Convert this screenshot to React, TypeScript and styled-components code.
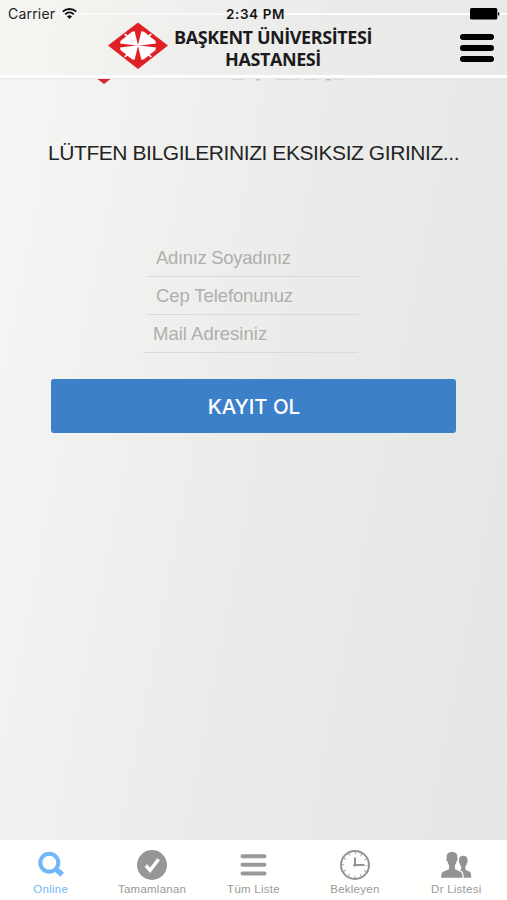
import React from "react";
import styled, { createGlobalStyle } from "styled-components";

const GlobalStyle = createGlobalStyle`
  *, *::before, *::after { box-sizing: border-box; }
  body { margin: 0; font-family: "Liberation Sans", Arial, sans-serif; }
`;

const Screen = styled.div`
  display: flex;
  flex-direction: column;
  width: 507px;
  height: 900px;
  overflow: hidden;
  background: linear-gradient(101deg, #f6f7f4 0%, #f1f1f0 25%, #ebecea 52%, #e6e9e6 80%, #e3e6e3 100%);
`;

const Header = styled.header`
  display: flex;
  flex-direction: column;
  height: 79px;
  background: linear-gradient(100deg, #f6f6f3 0%, #f0f0ee 30%, #ebecea 65%, #e9eae8 100%);
  border-bottom: 1px solid #e5e6e4;
`;

const StatusBar = styled.div`
  display: grid;
  grid-template-columns: 1fr auto 1fr;
  align-items: center;
  height: 19px;
  padding: 8px 7px 0 8px;
  line-height: 12px;
  background: linear-gradient(90deg, #f6f6f4, #fff) 0 13px / 100% 2px no-repeat;
`;

const Carrier = styled.div`
  display: flex;
  align-items: center;
  gap: 7px;
  font: 14px/12px Inter, sans-serif;
  letter-spacing: 0.2px;
  color: #222;
`;

const Clock = styled.time`
  margin-left: 3px;
  font: 600 13.5px/12px Inter, sans-serif;
  letter-spacing: 0.6px;
  color: #151515;
`;

const BatterySlot = styled.div`
  display: flex;
  justify-content: flex-end;
`;

const Brand = styled.div`
  display: grid;
  grid-template-columns: 60px 198px 1fr;
  column-gap: 6px;
  height: 56px;
  padding: 3px 13px 0 108px;
`;

const BrandName = styled.h1`
  margin: 4px 0 0;
  font: 700 18px/22px "Open Sans", sans-serif;
  letter-spacing: -0.42px;
  text-align: center;
  white-space: nowrap;
  color: #1b1b1d;
`;

const MenuButton = styled.button`
  display: flex;
  flex-direction: column;
  gap: 5px;
  justify-self: end;
  width: 34px;
  margin: 12px 0 0;
  padding: 0;
  border: 0;
  background: none;
`;

const MenuBar = styled.span`
  width: 34px;
  height: 6px;
  border-radius: 3px;
  background: #000;
`;

const HeaderEdge = styled.div`
  height: 3px;
  background: #fff;
`;

const Content = styled.main`
  display: flex;
  flex: 1;
  flex-direction: column;
`;

const LogoRemnant = styled.svg`
  display: block;
  width: 507px;
  height: 6px;
`;

const Title = styled.h2`
  margin: 55px 0 0 48px;
  font-size: 21px;
  font-weight: 400;
  line-height: 26px;
  letter-spacing: -0.43px;
  white-space: nowrap;
  color: #242424;
`;

const Form = styled.form`
  display: flex;
  flex-direction: column;
  margin-top: 73px;
`;

const Field = styled.input<{ $shift?: number; $tracking?: number }>`
  width: 215px;
  height: 38px;
  margin-left: ${({ $shift = 0 }) => 146 + $shift}px;
  padding: 0 0 0 10px;
  border: 0;
  border-bottom: 1px solid #d9dbd9;
  border-radius: 0;
  outline: 0;
  background: transparent;
  font: 18.5px/22px "Liberation Sans", Arial, sans-serif;
  letter-spacing: ${({ $tracking = 0 }) => $tracking}px;
  color: #333;
  &::placeholder {
    color: #aeafad;
    opacity: 1;
  }
`;

const SubmitButton = styled.button`
  width: 405px;
  height: 54px;
  margin: 26px 0 0 51.4px;
  padding: 1px 0 0;
  border: 0;
  border-radius: 3px;
  background: #3d80ca;
  font: 500 20.5px/53px Inter, sans-serif;
  letter-spacing: -0.1px;
  color: #fff;
`;

const TabBar = styled.nav`
  display: grid;
  grid-template-columns: repeat(5, 1fr);
  height: 60px;
  background: #fffffe;
`;

const Tab = styled.a<{ $active?: boolean }>`
  display: flex;
  flex-direction: column;
  align-items: center;
  gap: 1px;
  padding-top: 9px;
  font-size: 11.5px;
  line-height: 14px;
  letter-spacing: 0.25px;
  color: ${({ $active }) => ($active ? "#71b7fb" : "#999")};
`;

const TabIcon = styled.svg`
  display: block;
  width: 32px;
  height: 32px;
`;

const WifiIcon = () => (
  <svg width="15" height="12" viewBox="0 0 15 12" fill="none" stroke="#111" strokeWidth="1.8">
    <path d="M.8 3.700c3.800-3.600 9.600-3.600 13.400 0" />
    <path d="M3.200 6.300c2.500-2.400 6.100-2.400 8.600 0" />
    <path d="M5 8.400c1.500-1.400 3.500-1.400 5 0L7.500 11Z" fill="#111" stroke="none" />
  </svg>
);

const BatteryIcon = () => (
  <svg width="30" height="12" viewBox="0 0 30 12">
    <rect width="27.3" height="11.6" rx="1.5" />
    <path d="M28 4c2 .6 2 3.200 0 3.800Z" />
  </svg>
);

const LogoMark = () => (
  <svg width="60" height="48" viewBox="0 0 60 48">
    <path d="M30 .5 60 23.500 30 47 0 23.500Z" fill="#df2127" />
    <g fill="#fffdfd">
      {["", "matrix(-1 0 0 1 60 0)", "matrix(1 0 0 -1 0 47)", "matrix(-1 0 0 -1 60 47)"].map((t) => (
        <path key={t} transform={t || undefined} d="M30.200 23.700 26.600 9.200 24 9.700 19.600 13.300 17.200 11.500 16.100 12.400 18.200 14.400 12.600 18.700 12 21.400Z" />
      ))}
    </g>
  </svg>
);

const tabs: { label: string; active?: boolean; icon: React.ReactNode }[] = [
  {
    label: "Online",
    active: true,
    icon: (
      <g fill="none" stroke="#71b7fb">
        <circle cx="14.300" cy="13.800" r="9" strokeWidth="4" />
        <path d="m21 20.500 2 1.500" strokeWidth="4" />
        <path d="m22.500 21.500 4.700 4.300" strokeWidth="5.500" />
      </g>
    ),
  },
  {
    label: "Tamamlanan",
    icon: (
      <>
        <circle cx="16" cy="16" r="15" fill="#969696" />
        <path d="m9.800 16.500 4.300 4.800 8.500-11" fill="none" stroke="#fff" strokeWidth="3.400" />
      </>
    ),
  },
  {
    label: "Tüm Liste",
    icon: (
      <g stroke="#999" strokeWidth="4" strokeLinecap="round">
        <path d="M5.500 7.200h22M5.500 15.800h22M5.500 24.500h22" />
      </g>
    ),
  },
  {
    label: "Bekleyen",
    icon: (
      <g fill="none" stroke="#939393">
        <circle cx="16" cy="16" r="14" strokeWidth="2" />
        <circle cx="16" cy="16" r="11.900" strokeWidth="2.200" strokeDasharray=".9 5.331" strokeDashoffset=".45" />
        <path d="M16 8.500V16h9.500" strokeWidth="2" />
        <circle cx="16" cy="16" r="1.800" fill="#939393" stroke="none" />
      </g>
    ),
  },
  {
    label: "Dr Listesi",
    icon: (
      <g fill="#939393">
        <path d="M12 3c4.600 0 5.800 2.700 5.300 6.200.8.700.3 2.700-.7 3.100-.4 1.900-.9 2.900-1.600 3.700v4c1 1.400 5.700 2.100 6.700 3.800.7 1.200.7 3.200.7 5H1.200c0-1.800 0-3.800.7-5 1-1.700 6.100-2.400 7.100-3.800v-4c-.7-.8-1.200-1.800-1.600-3.700-1-.4-1.500-2.400-.7-3.100C6.200 5.700 7.400 3 12 3Z" />
        <path d="M23.200 6.700c3.600 0 4.600 2.200 4.200 5 .6.700.2 2.300-.6 2.700-.3 1.500-.8 2.300-1.400 3v3.100c.8 1.300 4.700 1.700 5.300 3.300.4 1.200.5 3 .5 5h-7.600c0-2.400 0-4-.7-5.400-.6-1.200-1.800-1.900-3-2.400.8-.4 1.300-.7 1.300-1.100v-2.500c-.6-.7-1.100-1.500-1.400-3-.8-.4-1.200-2-.6-2.700-.4-2.800.4-5 4-5Z" />
      </g>
    ),
  },
];

export default function App() {
  return (
    <>
      <GlobalStyle />
      <Screen>
        <Header>
          <StatusBar>
            <Carrier>
              Carrier
              <WifiIcon />
            </Carrier>
            <Clock>2:34 PM</Clock>
            <BatterySlot>
              <BatteryIcon />
            </BatterySlot>
          </StatusBar>
          <Brand>
            <LogoMark />
            <BrandName>
              BAŞKENT ÜNİVERSİTESİ
              <br />
              HASTANESİ
            </BrandName>
            <MenuButton aria-label="Menu">
              <MenuBar />
              <MenuBar />
              <MenuBar />
            </MenuButton>
          </Brand>
          <HeaderEdge />
        </Header>
        <Content>
          <LogoRemnant viewBox="0 0 507 6">
            <path d="M97.500 0h13L104 5Z" fill="#d4232b" />
            <path d="M232 .5h13M276 .5h22M304 .5h14M334 .5h9" stroke="#d9dad8" />
            <path d="M256 .8h4M326 .8h5" stroke="#bdbebc" strokeWidth="1.500" />
          </LogoRemnant>
          <Title>LÜTFEN BILGILERINIZI EKSIKSIZ GIRINIZ...</Title>
          <Form>
            <Field placeholder="Adınız Soyadınız" $tracking={-0.32} />
            <Field placeholder="Cep Telefonunuz" $tracking={-0.1} />
            <Field placeholder="Mail Adresiniz" $shift={-3} />
            <SubmitButton type="button">KAYIT OL</SubmitButton>
          </Form>
        </Content>
        <TabBar>
          {tabs.map(({ label, active, icon }) => (
            <Tab key={label} $active={active}>
              <TabIcon viewBox="0 0 32 32">{icon}</TabIcon>
              {label}
            </Tab>
          ))}
        </TabBar>
      </Screen>
    </>
  );
}
